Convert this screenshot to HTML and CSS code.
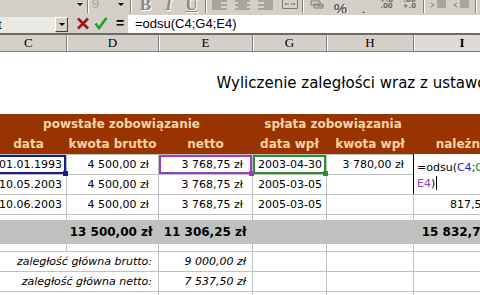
FILE: index.html
```html
<!DOCTYPE html>
<html lang="pl">
<head>
  <meta charset="UTF-8" />
  <title>Wyliczenie zaległości</title>
  <link rel="stylesheet" href="styles.css">
</head>
<body>

  <div class="toolbar">
    <div class="combo combo-font"><span class="arrow"></span></div>
    <div class="combo combo-size"><span class="size">9</span><span class="arrow"></span></div>
    <span class="sep"></span>
    <span class="btn glyph">B</span>
    <span class="btn glyph slant">I</span>
    <span class="btn glyph under">U</span>
    <span class="sep narrow"></span>
    <span class="btn">
      <svg width="23" height="13" viewBox="0 0 23 13"><path d="M4 1h15M4 3h9M4 5h15M4 7h9M4 9h15" class="ln"/></svg>
    </span>
    <span class="btn">
      <svg width="23" height="13" viewBox="0 0 23 13"><path d="M4 1h15M7 3h9M4 5h15M7 7h9M4 9h15" class="ln"/></svg>
    </span>
    <span class="btn">
      <svg width="23" height="13" viewBox="0 0 23 13"><path d="M4 1h15M10 3h9M4 5h15M10 7h9M4 9h15" class="ln"/></svg>
    </span>
    <span class="btn">
      <svg width="23" height="13" viewBox="0 0 23 13"><path d="M5.5 0v8.5h15v-8.5M8 4h4M14 4h4M9 3l-1 1 1 1M17 3l1 1-1 1" class="ln"/></svg>
    </span>
    <span class="sep"></span>
    <span class="btn">
      <svg width="23" height="13" viewBox="0 0 23 13"><path d="M5 1h9v4h-9zM8 4h9v4h-9zM11 6h6" class="ln"/></svg>
    </span>
    <span class="btn glyph pct">%</span>
    <span class="btn glyph comma">,</span>
    <span class="btn dec"><span>+.0</span><span>.00</span></span>
    <span class="btn dec"><span>.00</span><span>+.0</span></span>
    <span class="sep"></span>
    <span class="btn">
      <svg width="23" height="13" viewBox="0 0 23 13"><path d="M10 1h9M10 3h9M10 5h9M10 7h9M4 3l3 2-3 2" class="ln"/></svg>
    </span>
    <span class="btn">
      <svg width="23" height="13" viewBox="0 0 23 13"><path d="M10 1h9M10 3h9M10 5h9M10 7h9M7 3l-3 2 3 2" class="ln"/></svg>
    </span>
    <span class="sep"></span>
  </div>

  <div class="formula-bar">
    <div class="name-box">t</div>
    <span class="name-drop"><span class="arrow"></span></span>
    <svg class="fx-icon" width="14" height="13" viewBox="0 0 14 13">
      <path d="M2 1.5l10 10M12 1.5l-10 10" stroke="#a01818" stroke-width="2.6" fill="none"/>
    </svg>
    <svg class="fx-icon" width="14" height="13" viewBox="0 0 14 13">
      <path d="M1.5 6.5l3.5 4.5 7.5-10" stroke="#22a022" stroke-width="2.6" fill="none"/>
    </svg>
    <span class="fx-eq">=</span>
    <div class="formula">=odsu(C4;G4;E4)</div>
  </div>

  <table class="sheet">
    <colgroup>
      <col class="col-c"><col class="col-d"><col class="col-e"><col class="col-g"><col class="col-h"><col class="col-i">
    </colgroup>
    <tr class="heads">
      <th>C</th><th>D</th><th>E</th><th>G</th><th>H</th><th class="active">I</th>
    </tr>
    <tr class="blank"><td colspan="6"></td></tr>
    <tr class="title-row"><td colspan="6" class="title">Wyliczenie zaległości wraz z ustawowymi odsetkami</td></tr>
    <tr class="blank"><td colspan="6"></td></tr>
    <tr class="band">
      <td colspan="3">powstałe zobowiązanie</td>
      <td colspan="2">spłata zobowiązania</td>
      <td></td>
    </tr>
    <tr class="band">
      <td>data</td><td>kwota brutto</td><td>netto</td><td>data wpł</td><td>kwota wpł</td><td>należne</td>
    </tr>
    <tr class="grid">
      <td class="date ref ref-blue">01.01.1993<span class="handle"></span></td>
      <td class="money">4 500,00 zł</td>
      <td class="money ref ref-purple">3 768,75 zł<span class="handle"></span></td>
      <td class="date ref ref-green">2003-04-30<span class="handle"></span></td>
      <td class="money">3 780,00 zł</td>
      <td class="editing">
        <div class="editor">=odsu(<span class="r-blue">C4</span>;<span class="r-green">G4</span>;<br><span class="r-purple">E4</span>)<span class="caret"></span></div>
      </td>
    </tr>
    <tr class="grid">
      <td class="date">10.05.2003</td>
      <td class="money">4 500,00 zł</td>
      <td class="money">3 768,75 zł</td>
      <td class="date">2005-03-05</td>
      <td></td>
      <td></td>
    </tr>
    <tr class="grid">
      <td class="date">10.06.2003</td>
      <td class="money">4 500,00 zł</td>
      <td class="money">3 768,75 zł</td>
      <td class="date">2005-03-05</td>
      <td></td>
      <td class="money">817,51 zł</td>
    </tr>
    <tr class="grid thin"><td></td><td></td><td></td><td></td><td></td><td></td></tr>
    <tr class="total">
      <td></td>
      <td class="money">13 500,00 zł</td>
      <td class="money">11 306,25 zł</td>
      <td></td>
      <td></td>
      <td class="money">15 832,73 zł</td>
    </tr>
    <tr class="grid spacer"><td></td><td></td><td></td><td></td><td></td><td></td></tr>
    <tr class="grid">
      <td colspan="2" class="label">zaległość główna brutto:</td>
      <td class="money label">9 000,00 zł</td>
      <td></td><td></td><td></td>
    </tr>
    <tr class="grid">
      <td colspan="2" class="label">zaległość główna netto:</td>
      <td class="money label">7 537,50 zł</td>
      <td></td><td></td><td></td>
    </tr>
    <tr class="grid">
      <td colspan="2"></td><td></td><td></td><td></td><td></td>
    </tr>
  </table>

</body>
</html>
```

FILE: styles.css
```css
body {
  margin: 0;
  width: 480px;
  height: 295px;
  overflow: hidden;
  background: #fff;
  font-family: "DejaVu Sans", Verdana, sans-serif;
  color: #000;
}

/* toolbar (only its lower edge is visible) */

.toolbar {
  display: flex;
  align-items: flex-end;
  height: 13px;
  background: #d4d0c8;
  overflow: hidden;
}

.combo {
  position: relative;
  height: 13px;
  flex: none;
}

.combo-font {
  width: 87px;
}

.combo-size {
  width: 41px;
  border-left: 1px solid #808080;
  box-shadow: inset 1px 0 0 #fff;
  box-sizing: border-box;
}

.combo .arrow {
  position: absolute;
  right: 4px;
  top: 3px;
  border-left: 3px solid transparent;
  border-right: 3px solid transparent;
  border-top: 3px solid #000;
}

.combo-size .size {
  position: absolute;
  left: 4px;
  bottom: 3px;
  font: 13px "Liberation Sans", sans-serif;
  color: #a8a59d;
  line-height: 13px;
}

.sep {
  flex: none;
  width: 6px;
  height: 13px;
  background: linear-gradient(to right, transparent 2px, #808080 2px, #808080 3px, #fff 3px, #fff 4px, transparent 4px);
}

.sep.narrow {
  width: 5px;
}

.btn {
  flex: none;
  width: 23px;
  height: 13px;
  display: flex;
  align-items: flex-end;
  justify-content: center;
}

.btn svg {
  display: block;
}

.ln {
  stroke: #7c7a74;
  stroke-width: 1;
  fill: none;
}

.glyph {
  font: bold 17px "Liberation Serif", serif;
  color: #8c8982;
  text-shadow: 1px 1px 0 #fff;
  line-height: 10px;
  height: 13px;
  align-items: flex-start;
  margin-top: -4px;
}

.glyph.slant {
  font-style: italic;
}

.glyph.under {
  text-decoration: underline;
}

.glyph.pct {
  font: bold 15px "Liberation Sans", sans-serif;
  color: #5c5a55;
  margin-top: -2px;
}

.glyph.comma {
  font: bold 15px "Liberation Sans", sans-serif;
  color: #5c5a55;
  margin-top: -6px;
}

.dec {
  flex-direction: column;
  align-items: center;
  justify-content: flex-start;
  font: bold 7px "DejaVu Sans", sans-serif;
  color: #6c6a64;
  line-height: 6px;
  margin-top: -3px;
  height: 16px;
}

/* formula bar */

.formula-bar {
  display: flex;
  align-items: flex-end;
  height: 20px;
  background: #d4d0c8;
  border-bottom: 2px solid #6e6c67;
}

.name-box {
  width: 55px;
  height: 16px;
  background: #ebe9e4;
  font: 13px "Liberation Sans", sans-serif;
  line-height: 16px;
  text-indent: -2px;
  overflow: hidden;
}

.name-drop {
  position: relative;
  width: 13px;
  height: 15px;
  margin-bottom: 1px;
  box-sizing: border-box;
  border-left: 1px solid #fff;
  border-top: 1px solid #fff;
  border-right: 1px solid #404040;
  border-bottom: 1px solid #404040;
  background: #d4d0c8;
}

.name-drop .arrow {
  position: absolute;
  left: 3px;
  top: 5px;
  border-left: 3px solid transparent;
  border-right: 3px solid transparent;
  border-top: 3px solid #000;
}

.fx-icon {
  margin-left: 8px;
  margin-bottom: 3px;
}

.fx-icon + .fx-icon {
  margin-left: 4px;
}

.fx-eq {
  width: 7px;
  margin-left: 8px;
  margin-bottom: 3px;
  font: bold 14px "Liberation Sans", sans-serif;
  line-height: 14px;
}

.formula {
  flex: 1;
  height: 18px;
  margin-left: 5px;
  padding-left: 7px;
  background: #fff;
  font: 13px "Liberation Sans", sans-serif;
  line-height: 18px;
  white-space: nowrap;
}

/* sheet */

.sheet {
  border-collapse: collapse;
  table-layout: fixed;
  width: 520px;
  margin-left: -10px;
  font-size: 11px;
}

.col-c { width: 76px; }
.col-d { width: 92px; }
.col-e { width: 94px; }
.col-g { width: 74px; }
.col-h { width: 87px; }
.col-i { width: 97px; }

.sheet th,
.sheet td {
  padding: 0;
  white-space: nowrap;
  overflow: visible;
}

.heads th {
  height: 16px;
  background: #d4d0c8;
  border-right: 1px solid #808080;
  border-bottom: 1px solid #808080;
  box-shadow: inset 1px 0 0 #fff;
  font: 13px "Liberation Serif", serif;
  text-align: center;
  line-height: 16px;
}

.heads th.active {
  font-weight: bold;
  background: #dedbd4;
}

.blank td {
  height: 20px;
}

.title-row td {
  height: 22px;
}

.title {
  padding-left: 226px !important;
  font-size: 15px;
}

.band td {
  height: 20px;
  background: #993300;
  color: #fcd3a4;
  font-weight: bold;
  font-size: 12px;
  text-align: center;
}

.grid td {
  height: 19px;
  border: 1px solid #c0c0c0;
}

.grid.thin td {
  height: 5px;
}

.grid.spacer td {
  height: 7px;
}

.total td {
  height: 22px;
  background: #c0c0c0;
  font-weight: bold;
  font-size: 12px;
}

.date {
  text-align: right;
  padding-right: 4px !important;
}

.money {
  text-align: right;
  padding-right: 9px !important;
}

.total .money {
  padding-right: 6px !important;
}

.label {
  font-style: italic;
  text-align: right;
  padding-right: 6px !important;
}

/* range references shown while the formula is edited */

.ref {
  position: relative;
}

.ref-blue { box-shadow: inset 0 0 0 2px #1c1c8a; }
.ref-purple { box-shadow: inset 0 0 0 2px #9a3fc4; }
.ref-green { box-shadow: inset 0 0 0 2px #2f8f2f; }

.handle {
  position: absolute;
  right: -2px;
  bottom: -2px;
  width: 5px;
  height: 5px;
}

.ref-blue .handle { background: #1c1c8a; }
.ref-purple .handle { background: #9a3fc4; }
.ref-green .handle { background: #2f8f2f; }

.editing {
  position: relative;
}

.editor {
  position: absolute;
  top: -1px;
  left: -1px;
  width: 110px;
  height: 40px;
  padding: 6px 0 0 3px;
  box-sizing: border-box;
  background: #fff;
  border-left: 1px solid #000;
  font-size: 11px;
  line-height: 16px;
  text-align: left;
}

.r-blue { color: #2424c8; }
.r-green { color: #1c8c1c; }
.r-purple { color: #9a3fc4; }

.caret {
  display: inline-block;
  width: 1px;
  height: 14px;
  margin-left: 1px;
  vertical-align: -3px;
  background: #000;
}
```
